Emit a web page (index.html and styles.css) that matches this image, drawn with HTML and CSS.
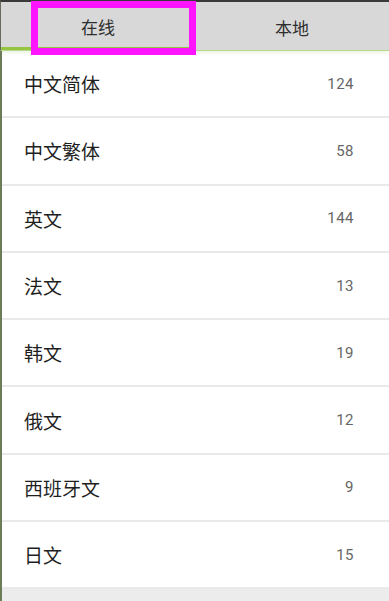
FILE: index.html
```html
<!DOCTYPE html>
<html lang="zh">
<head>
<meta charset="utf-8">
<link rel="stylesheet" href="styles.css">
</head>
<body>
<div class="screen">
  <div class="tabs">
    <div class="tab active"><span>在线</span></div>
    <div class="tab"><span>本地</span></div>
  </div>
  <div class="highlight"></div>
  <ul class="list">
    <li class="row"><span class="name">中文简体</span><span class="count">124</span></li>
    <li class="row"><span class="name">中文繁体</span><span class="count">58</span></li>
    <li class="row"><span class="name">英文</span><span class="count">144</span></li>
    <li class="row"><span class="name">法文</span><span class="count">13</span></li>
    <li class="row"><span class="name">韩文</span><span class="count">19</span></li>
    <li class="row"><span class="name">俄文</span><span class="count">12</span></li>
    <li class="row"><span class="name">西班牙文</span><span class="count">9</span></li>
    <li class="row"><span class="name">日文</span><span class="count">15</span></li>
  </ul>
  <div class="footer"></div>
</div>
</body>
</html>
```
FILE: styles.css
```css
html, body {
  margin: 0;
  padding: 0;
  background: #ffffff;
}
.screen {
  position: relative;
  width: 389px;
  height: 601px;
  overflow: hidden;
  display: flex;
  flex-direction: column;
  font-family: "Noto Sans CJK SC", "Noto Sans", sans-serif;
}
.tabs {
  display: flex;
  height: 48px;
  background: #d8d8d8;
  border-top: 2px solid #3a3a3a;
  border-left: 1px solid #6a6a5e;
  border-bottom: 1px solid #b8d890;
  box-shadow: 0 2px 3px rgba(180, 215, 140, 0.25);
}
.tab {
  flex: 1;
  display: flex;
  align-items: center;
  justify-content: center;
  font-size: 17px;
  color: #2e2e2e;
  box-sizing: border-box;
  padding-top: 3px;
}
.tab.active {
  flex: 0 0 194px;
  border-bottom: 3px solid #93c541;
}
.highlight {
  position: absolute;
  left: 31px;
  top: 1px;
  width: 165px;
  height: 54px;
  box-sizing: border-box;
  border: 7px solid #ff14ff;
}
.list {
  list-style: none;
  margin: 0;
  padding: 0;
  border-left: 2px solid #6c7b58;
}
.row {
  height: 65.3px;
  border-bottom: 2px solid #e9e9e9;
  display: flex;
  align-items: center;
  justify-content: space-between;
  padding: 0 35px 0 22px;
}
.name {
  font-size: 19px;
  color: #1f1f1f;
}
.count {
  font-family: Roboto, "Liberation Sans", sans-serif;
  font-size: 15px;
  color: #666666;
  letter-spacing: 0.5px;
}
.footer {
  flex: 1;
  background: #ececec;
  border-left: 2px solid #6c7b58;
}
```
